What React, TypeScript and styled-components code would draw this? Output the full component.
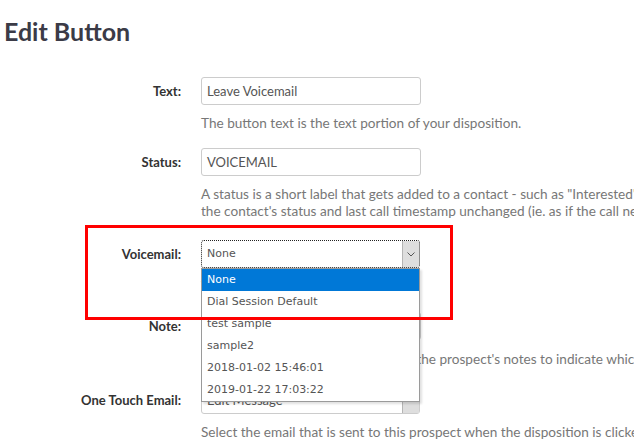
import React from 'react';
import styled, { createGlobalStyle } from 'styled-components';

const GlobalStyle = createGlobalStyle`
  html, body {
    margin: 0;
    padding: 0;
    background: #fff;
    overflow: hidden;
  }
  body {
    font-family: Lato, "Liberation Sans", sans-serif;
  }
`;

const StyledPage = styled.div`
  position: relative;
  width: 634px;
  height: 448px;
  overflow: hidden;
  padding-left: 4px;
  box-sizing: border-box;
`;

const Title = styled.h1`
  margin: 0;
  height: 77px;
  padding-top: 16px;
  box-sizing: border-box;
  font-size: 25px;
  line-height: 30px;
  font-weight: 700;
  color: #3b3b47;
`;

const Form = styled.div`
  display: flex;
  flex-direction: column;
`;

const Row = styled.div<{ $mb: number }>`
  display: grid;
  grid-template-columns: 177px 1fr;
  column-gap: 20px;
  margin-bottom: ${(p) => p.$mb}px;
`;

const Label = styled.label`
  text-align: right;
  font-size: 13px;
  font-weight: 700;
  line-height: 28px;
  color: #333;
  white-space: nowrap;
`;

const Field = styled.div`
  position: relative;
  min-width: 0;
`;

const TextInput = styled.div`
  width: 220px;
  height: 28px;
  box-sizing: border-box;
  border: 1px solid #ccc;
  border-radius: 3px;
  padding: 0 5px;
  font-size: 13px;
  line-height: 26px;
  color: #555;
  white-space: nowrap;
  overflow: hidden;
`;

const Help = styled.div<{ $mt?: number }>`
  margin-top: ${(p) => p.$mt ?? 10}px;
  font-size: 13.6px;
  line-height: 17px;
  color: #777;
  white-space: nowrap;
`;

const SelectBox = styled.div<{ $focused?: boolean }>`
  position: relative;
  display: flex;
  width: 219px;
  height: 28px;
  box-sizing: border-box;
  border: 1px ${(p) => (p.$focused ? 'dotted #222' : 'solid #ccc')};
  border-radius: 3px;
  background: #fff;
`;

const SelectValue = styled.div<{ $system?: boolean }>`
  flex: 1;
  padding-left: 5px;
  font-family: ${(p) => (p.$system ? '"DejaVu Sans", sans-serif' : 'inherit')};
  font-size: ${(p) => (p.$system ? 11 : 13)}px;
  line-height: 26px;
  color: #555;
  white-space: nowrap;
  overflow: hidden;
`;

const ArrowBox = styled.div`
  width: 16px;
  display: flex;
  align-items: center;
  justify-content: center;
  background: #dedede;
  border-left: 1px solid #b5b5b5;
`;

const DropList = styled.ul`
  position: absolute;
  top: calc(100% + 1px);
  left: -1px;
  z-index: 2;
  width: 219px;
  margin: 0;
  padding: 0;
  list-style: none;
  box-sizing: border-box;
  border: 1px solid #9a9a9a;
  background: #fff;
  box-shadow: 2px 2px 2px rgba(0, 0, 0, 0.12);
`;

const DropItem = styled.li<{ $active?: boolean }>`
  height: 22px;
  padding-left: 5px;
  font-family: "DejaVu Sans", sans-serif;
  font-size: 11px;
  line-height: 22px;
  color: ${(p) => (p.$active ? '#fff' : '#555')};
  background: ${(p) => (p.$active ? '#0078d7' : 'transparent')};
  white-space: nowrap;
`;

const Highlight = styled.div`
  position: absolute;
  left: 85px;
  top: 225px;
  z-index: 3;
  width: 368px;
  height: 95px;
  box-sizing: border-box;
  border: 3px solid #ff0000;
  pointer-events: none;
`;

const Chevron = () => (
  <svg width="8" height="5" viewBox="0 0 8 5">
    <path d="M0.5 0.5 L4 4 L7.5 0.5" fill="none" stroke="#555" strokeWidth="1" />
  </svg>
);

const voicemailOptions = [
  'None',
  'Dial Session Default',
  'test sample',
  'sample2',
  '2018-01-02 15:46:01',
  '2019-01-22 17:03:22',
];

const App = () => (
  <StyledPage>
    <GlobalStyle />
    <Title>Edit Button</Title>
    <Form>
      <Row $mb={16}>
        <Label>Text:</Label>
        <Field>
          <TextInput>Leave Voicemail</TextInput>
          <Help>The button text is the text portion of your disposition.</Help>
        </Field>
      </Row>
      <Row $mb={20}>
        <Label>Status:</Label>
        <Field>
          <TextInput>VOICEMAIL</TextInput>
          <Help>
            A status is a short label that gets added to a contact - such as "Interested" or "Not
            Interested".
            <br />
            the contact's status and last call timestamp unchanged (ie. as if the call never happened).
          </Help>
        </Field>
      </Row>
      <Row $mb={17}>
        <Label>Voicemail:</Label>
        <Field>
          <SelectBox $focused>
            <SelectValue $system>None</SelectValue>
            <ArrowBox>
              <Chevron />
            </ArrowBox>
            <DropList>
              {voicemailOptions.map((opt, i) => (
                <DropItem key={opt} $active={i === 0}>
                  {opt}
                </DropItem>
              ))}
            </DropList>
          </SelectBox>
          <Help>Voicemail to leave.</Help>
        </Field>
      </Row>
      <Row $mb={18}>
        <Label>Note:</Label>
        <Field>
          <TextInput />
          <Help $mt={11}>
            Optional note text that is written to the prospect's notes to indicate which disposition was used.
          </Help>
        </Field>
      </Row>
      <Row $mb={0}>
        <Label>One Touch Email:</Label>
        <Field>
          <SelectBox>
            <SelectValue>Edit Message</SelectValue>
            <ArrowBox />
          </SelectBox>
          <Help>Select the email that is sent to this prospect when the disposition is clicked.</Help>
        </Field>
      </Row>
    </Form>
    <Highlight />
  </StyledPage>
);

export default App;
